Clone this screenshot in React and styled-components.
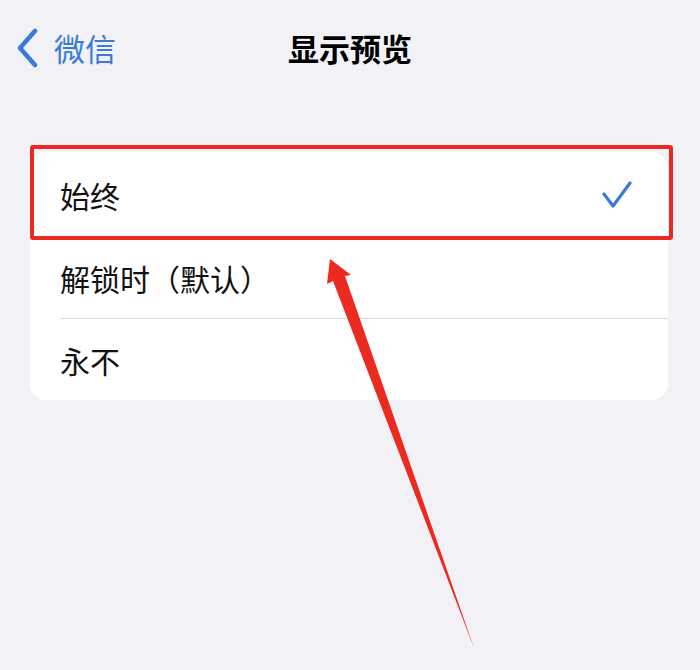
import React from "react";
import styled, { createGlobalStyle } from "styled-components";

const GlobalStyle = createGlobalStyle`
  html, body {
    margin: 0;
    padding: 0;
    background: #f1f1f6;
  }
  body {
    font-family: "Noto Sans CJK SC", "Noto Sans", sans-serif;
  }
`;

const Page = styled.div`
  position: relative;
  width: 700px;
  height: 670px;
  background: #f1f1f6;
  overflow: hidden;
`;

const NavBar = styled.div`
  display: grid;
  grid-template-columns: 1fr auto 1fr;
  align-items: center;
  height: 95px;
  padding: 0 16px;
  box-sizing: border-box;
`;

const BackButton = styled.div`
  display: flex;
  align-items: center;
  gap: 14px;
  color: #3a7bd8;
  font-size: 31px;
  line-height: 1;
  svg {
    display: block;
  }
`;

const Title = styled.div`
  font-size: 31px;
  font-weight: 700;
  color: #000;
  line-height: 1;
`;

const Card = styled.div`
  margin: 57px 32px 0 30px;
  background: #fff;
  border-radius: 16px;
  overflow: hidden;
`;

const Row = styled.div`
  display: flex;
  align-items: center;
  justify-content: space-between;
  height: ${(p) => p.h}px;
  margin-left: 30px;
  padding-right: 36px;
  box-sizing: border-box;
  font-size: 30px;
  color: #111;
  border-top: ${(p) => (p.sep ? "1px solid #d9d9dd" : "none")};
`;

const Highlight = styled.div`
  position: absolute;
  left: 30px;
  top: 145px;
  width: 643px;
  height: 95px;
  border: 4px solid #ea2a22;
  border-radius: 3px;
  box-sizing: border-box;
`;

const Arrow = styled.svg`
  position: absolute;
  left: 0;
  top: 0;
  pointer-events: none;
`;

export default function App() {
  return (
    <Page>
      <GlobalStyle />
      <NavBar>
        <BackButton>
          <svg width="24" height="40" viewBox="0 0 24 40">
            <polyline
              points="19,3 4,20 19,37"
              fill="none"
              stroke="#3a7bd8"
              strokeWidth="4.5"
              strokeLinecap="round"
              strokeLinejoin="round"
            />
          </svg>
          <span>微信</span>
        </BackButton>
        <Title>显示预览</Title>
        <div />
      </NavBar>
      <Card>
        <Row h={85}>
          <span>始终</span>
          <svg width="30" height="28" viewBox="0 0 30 28">
            <polyline
              points="2,13 11,25 28,2"
              fill="none"
              stroke="#3a7bd8"
              strokeWidth="3.2"
              strokeLinecap="round"
              strokeLinejoin="round"
            />
          </svg>
        </Row>
        <Row h={81}>
          <span>解锁时（默认）</span>
        </Row>
        <Row h={82} sep>
          <span>永不</span>
        </Row>
      </Card>
      <Highlight />
      <Arrow width="700" height="670" viewBox="0 0 700 670">
        <polygon
          points="330,259 351,275 345,276 474,648 333,281 327,284"
          fill="#ec2a1f"
        />
      </Arrow>
    </Page>
  );
}
